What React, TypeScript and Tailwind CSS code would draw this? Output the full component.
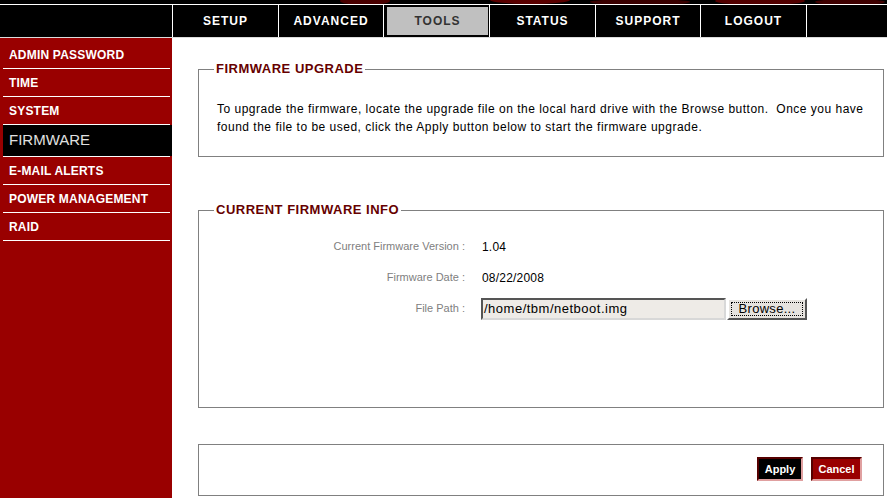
const navItems = [
  { label: "SETUP", w: "w-[106px]" },
  { label: "ADVANCED", w: "w-[105px]" },
  { label: "TOOLS", w: "w-[106px]", active: true },
  { label: "STATUS", w: "w-[106px]" },
  { label: "SUPPORT", w: "w-[105px]" },
  { label: "LOGOUT", w: "w-[106px]" },
];

const sideItems = [
  "ADMIN PASSWORD",
  "TIME",
  "SYSTEM",
  "FIRMWARE",
  "E-MAIL ALERTS",
  "POWER MANAGEMENT",
  "RAID",
];

const TopStrip = () => (
  <svg width="887" height="4" className="block bg-black">
    <ellipse cx="365" cy="1" rx="25" ry="4" fill="#4a0000" />
    <ellipse cx="530" cy="0" rx="40" ry="4" fill="#5a0000" />
    <ellipse cx="640" cy="2" rx="50" ry="3" fill="#3a0000" />
    <ellipse cx="760" cy="1" rx="45" ry="4" fill="#520000" />
    <ellipse cx="850" cy="2" rx="35" ry="3" fill="#3f0000" />
  </svg>
);

const Field = ({ label, children }: { label: string; children: React.ReactNode }) => (
  <div className="flex h-[31px] items-center">
    <div className="w-[251px] text-right text-[11px] text-[#808080]">{label} :</div>
    <div className="ml-[17px] flex items-center text-[12px] tracking-[0.2px] text-black">{children}</div>
  </div>
);

export default function App() {
  return (
    <div className="h-[498px] w-[887px] overflow-hidden bg-white font-['Liberation_Sans',Arial,sans-serif]">
      <TopStrip />
      <div className="flex h-[34px] border-y border-t-white border-b-[#dcdcdc] bg-black">
        <div className="w-[172px] shrink-0" />
        {navItems.map((item) => (
          <div key={item.label} className={`${item.w} flex shrink-0 border-l border-white`}>
            {item.active ? (
              <div className="my-[2px] ml-[3px] mr-[1px] flex flex-1 items-center justify-center bg-[#c0c0c0] text-[12px] font-bold tracking-[1px] text-[#333]">
                {item.label}
              </div>
            ) : (
              <div className="flex flex-1 items-center justify-center text-[12px] font-bold tracking-[1px] text-white">
                {item.label}
              </div>
            )}
          </div>
        ))}
        <div className="flex-1 border-l border-white" />
      </div>

      <div className="flex h-[460px]">
        <div className="w-[172px] shrink-0 bg-[#990000] pt-[3px] pl-[3px]">
          {sideItems.map((s) => (
            <div key={s}>
              {s === "FIRMWARE" ? (
                <div className="flex h-[31px] items-center bg-black pl-[6px] text-[15px] text-[#e0e0e0]">
                  {s}
                </div>
              ) : (
                <div className="flex h-[27px] items-center pl-[6px] text-[12px] font-bold tracking-[0.2px] text-white">
                  {s}
                </div>
              )}
              <div className="h-px w-[167px] bg-white" />
            </div>
          ))}
        </div>

        <div className="min-w-0 flex-1 pl-[26px]">
          <fieldset className="mt-[23px] w-[686px] border border-[#808080] px-[15px] pb-[20px]">
            <legend className="px-[2px] text-[13px] leading-[16px] font-bold tracking-[0.5px] text-[#660000]">
              FIRMWARE UPGRADE
            </legend>
            <p className="mt-[23px] pl-[3px] text-[12px] leading-[18px] tracking-[0.5px] whitespace-nowrap text-black">
              To upgrade the firmware, locate the upgrade file on the local hard drive with the Browse button.&nbsp; Once you have
              <br />
              found the file to be used, click the Apply button below to start the firmware upgrade.
            </p>
          </fieldset>

          <fieldset className="mt-[45px] h-[206px] w-[686px] border border-[#808080] px-[15px]">
            <legend className="px-[2px] text-[13px] leading-[16px] font-bold tracking-[0.5px] text-[#660000]">
              CURRENT FIRMWARE INFO
            </legend>
            <div className="mt-[13px]">
              <Field label="Current Firmware Version">1.04</Field>
              <Field label="Firmware Date">08/22/2008</Field>
              <Field label="File Path">
                <div className="-ml-px flex h-[22px] w-[245px] items-center border-2 border-t-[#555] border-l-[#555] border-r-[#d8d8d8] border-b-[#d8d8d8] bg-[#eeebe7] pl-px text-[13px] tracking-[0.5px]">
                  /home/tbm/netboot.img
                </div>
                <div className="ml-[1px] flex h-[22px] w-[80px] items-center justify-center border-2 border-t-white border-l-white border-r-[#555] border-b-[#555] bg-[#e6e3df] p-[2px]">
                  <div className="flex h-full w-full items-center justify-center border border-dotted border-black text-[13px] tracking-[0.3px]">
                    Browse...
                  </div>
                </div>
              </Field>
            </div>
          </fieldset>

          <div className="mt-[36px] flex h-[52px] w-[686px] items-start justify-end gap-[8px] border border-[#808080] pt-[12px] pr-[21px]">
            <button className="h-[24px] w-[46px] border-2 border-t-[#550000] border-l-[#550000] border-r-[#e0a0a0] border-b-[#e0a0a0] bg-black text-[11px] font-bold text-white">
              Apply
            </button>
            <button className="h-[24px] w-[51px] border-2 border-t-[#550000] border-l-[#550000] border-r-[#e0a0a0] border-b-[#e0a0a0] bg-[#990000] text-[11px] font-bold text-white">
              Cancel
            </button>
          </div>
        </div>
      </div>
    </div>
  );
}
